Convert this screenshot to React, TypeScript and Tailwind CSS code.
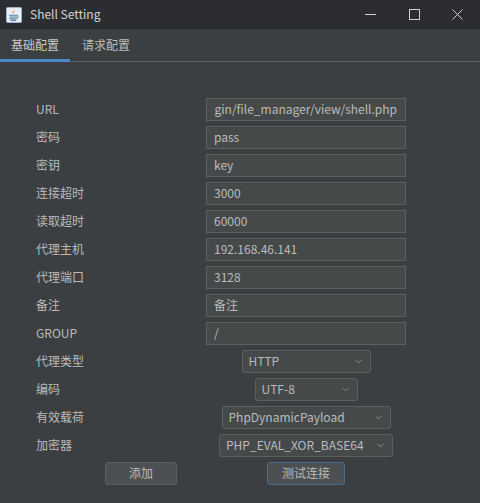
import { ChevronDown } from 'lucide-react';

const FONT = { fontFamily: '"Noto Sans CJK SC", "Noto Sans", sans-serif' };

/** Small Java coffee-cup window icon. */
function JavaIcon() {
  return (
    <svg viewBox="0 0 16 16" className="h-4 w-4" aria-hidden="true">
      <rect x="0.5" y="0.5" width="15" height="15" rx="1" fill="#e8eef6" stroke="#9fb3cc" />
      <path d="M8.6 2.2c1.2 1.2-1.4 2-0.4 3.4 0.3 0.5 0.9 0.7 0.9 0.7-1.9-0.3-2.3-1.5-1.3-2.4 0.7-0.6 1.1-1 0.8-1.7z" fill="#e76f00" />
      <path d="M6.4 4.6c-0.6 0.8 0.2 1.5 1.3 1.9-1.6-0.2-2.6-1.1-1.3-1.9z" fill="#e76f00" />
      <path d="M3.5 8.2h7.2M4 10h6.5M3.5 11.8h7.5M5 13.4h4.5" stroke="#5382a1" strokeWidth="1.1" strokeLinecap="round" />
      <path d="M11 8.4c1.6 0 1.6 2.2 0 2.2" stroke="#5382a1" strokeWidth="1" fill="none" />
    </svg>
  );
}

function TextField({ value, right }: { value: string; right?: boolean }) {
  return (
    <div
      className={`flex h-[23px] w-[200px] items-center overflow-hidden whitespace-nowrap border border-[#5e6060] bg-[#45494a] pb-px text-[12px] text-[#bbbbbb] ${
        right ? 'justify-end pr-[8px]' : 'pl-[7px]'
      }`}
    >
      {value}
    </div>
  );
}

function Combo({ value, width }: { value: string; width: string }) {
  return (
    <div
      className={`flex h-[23px] ${width} items-center justify-between justify-self-center rounded-[3px] border border-[#5e6060] bg-[#45494a] pl-[6px] pr-[6px] text-[12px] text-[#bbbbbb]`}
    >
      <span className="whitespace-nowrap pb-px">{value}</span>
      <ChevronDown size={11} strokeWidth={1.5} className="text-[#a9abad]" />
    </div>
  );
}

// the URL field is scrolled to its end, like the Swing text field
const fields: [string, string, boolean?][] = [
  ['URL', 'gin/file_manager/view/shell.php', true],
  ['密码', 'pass'],
  ['密钥', 'key'],
  ['连接超时', '3000'],
  ['读取超时', '60000'],
  ['代理主机', '192.168.46.141'],
  ['代理端口', '3128'],
  ['备注', '备注'],
  ['GROUP', '/'],
];

const combos: [string, string, string][] = [
  ['代理类型', 'HTTP', 'w-[129px]'],
  ['编码', 'UTF-8', 'w-[103px]'],
  ['有效载荷', 'PhpDynamicPayload', 'w-[169px]'],
  ['加密器', 'PHP_EVAL_XOR_BASE64', 'w-[174px]'],
];

export default function App() {
  return (
    <div className="flex h-[503px] w-[480px] flex-col bg-[#3c3f41] text-[#bbbbbb]" style={FONT}>
      {/* Title bar */}
      <div className="flex h-[29px] items-center bg-[#2b2d30]">
        <div className="ml-[6px]">
          <JavaIcon />
        </div>
        <span className="ml-[8px] pb-px text-[12px] text-[#d4d4d4]">Shell Setting</span>
        <div className="ml-auto flex items-center">
          <div className="flex w-[44px] justify-center">
            <div className="h-px w-[11px] bg-[#cfcfcf]" />
          </div>
          <div className="flex w-[44px] justify-center">
            <div className="h-[11px] w-[11px] border border-[#cfcfcf]" />
          </div>
          <div className="flex w-[44px] justify-center pr-[2px]">
            <svg viewBox="0 0 11 11" className="h-[11px] w-[11px]" aria-hidden="true">
              <path d="M0.5 0.5L10.5 10.5M10.5 0.5L0.5 10.5" stroke="#cfcfcf" strokeWidth="1" />
            </svg>
          </div>
        </div>
      </div>

      {/* Tabs */}
      <div className="flex h-[33px] border-b border-[#5e6060] text-[12px]">
        <div className="-mb-px flex h-[33px] items-center border-b-[3px] border-[#4a88c7] px-[11px] pt-[2px] text-[#c8c8c8]">
          基础配置
        </div>
        <div className="flex items-center px-[12px] pb-px text-[#bbbbbb]">请求配置</div>
      </div>

      {/* Form */}
      <div className="grid grid-cols-[170px_200px] gap-y-[5px] pl-[36px] pt-[36px] text-[12px]">
        {fields.map(([label, value, right]) => (
          <div key={label} className="contents">
            <div className="flex h-[23px] items-center pb-px">{label}</div>
            <TextField value={value} right={right} />
          </div>
        ))}
        {combos.map(([label, value, width]) => (
          <div key={label} className="contents">
            <div className="flex h-[23px] items-center pb-px">{label}</div>
            <Combo value={value} width={width} />
          </div>
        ))}
        <div className="flex h-[23px] items-center">
          <button className="ml-[69px] h-[23px] w-[72px] rounded-[3px] border border-[#5e6060] bg-[#4c5052] pb-px text-[12px] text-[#bbbbbb]">
            添加
          </button>
        </div>
        <div className="flex justify-center">
          <button className="h-[23px] w-[78px] rounded-[3px] border border-[#466d94] bg-[#4c5052] pb-px text-[12px] text-[#bbbbbb]">
            测试连接
          </button>
        </div>
      </div>
    </div>
  );
}
